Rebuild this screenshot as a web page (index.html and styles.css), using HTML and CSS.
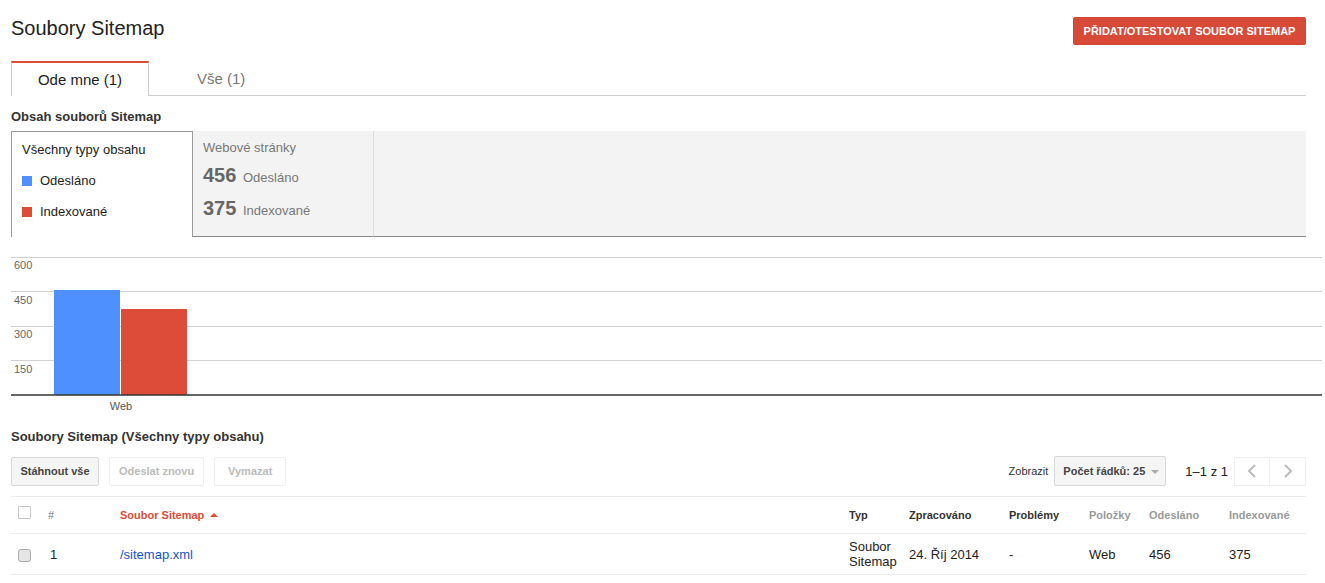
FILE: index.html
```html
<!DOCTYPE html>
<html lang="cs">
<head>
  <meta charset="UTF-8">
  <title>Soubory Sitemap</title>
  <link rel="stylesheet" href="styles.css">
</head>
<body>

<div class="page">
  <div class="header">
    <h1 class="title">Soubory Sitemap</h1>
    <button class="btn-red">PŘIDAT/OTESTOVAT SOUBOR SITEMAP</button>
  </div>

  <div class="tabs">
    <div class="tab active">Ode mne (1)</div>
    <div class="tab">Vše (1)</div>
  </div>

  <div class="subtitle">Obsah souborů Sitemap</div>

  <div class="legend">
    <div class="legend-left">
      <div class="legend-head">Všechny typy obsahu</div>
      <div class="legend-item"><span class="sq blue"></span>Odesláno</div>
      <div class="legend-item"><span class="sq red"></span>Indexované</div>
    </div>
    <div class="legend-stats">
      <div class="stats-head">Webové stránky</div>
      <div class="stat"><b>456</b> Odesláno</div>
      <div class="stat"><b>375</b> Indexované</div>
    </div>
    <div class="legend-rest"></div>
  </div>

  <div class="chart">
    <svg width="1311" height="165" viewBox="0 0 1311 165">
      <g stroke="#d0d0d0" stroke-width="1">
        <line x1="0" y1="7.5" x2="1311" y2="7.5"/>
        <line x1="0" y1="41.5" x2="1311" y2="41.5"/>
        <line x1="0" y1="76.5" x2="1311" y2="76.5"/>
        <line x1="0" y1="110.5" x2="1311" y2="110.5"/>
      </g>
      <g font-family="Arial, 'Liberation Sans', sans-serif" font-size="11" fill="#666">
        <text x="3" y="19">600</text>
        <text x="3" y="54">450</text>
        <text x="3" y="88">300</text>
        <text x="3" y="123">150</text>
        <text x="110" y="160" text-anchor="middle" fill="#555">Web</text>
      </g>
      <rect x="43" y="40" width="66" height="105" fill="#4d90fe"/>
      <rect x="110" y="59" width="66" height="86" fill="#dd4b39"/>
      <line x1="0" y1="145" x2="1311" y2="145" stroke="#333" stroke-width="1.5"/>
    </svg>
  </div>

  <div class="subtitle section">Soubory Sitemap (Všechny typy obsahu)</div>

  <div class="toolbar">
    <div class="actions">
      <button class="btn first">Stáhnout vše</button>
      <button class="btn disabled">Odeslat znovu</button>
      <button class="btn disabled wide">Vymazat</button>
    </div>
    <div class="paging">
      <span class="show">Zobrazit</span>
      <button class="btn select">Počet řádků: 25 <span class="caret"></span></button>
      <span class="range">1–1 z 1</span>
      <div class="nav">
        <button class="nav-btn"><svg width="10" height="14" viewBox="0 0 10 14"><path d="M8 1 L2 7 L8 13" fill="none" stroke="#bbb" stroke-width="2"/></svg></button>
        <button class="nav-btn"><svg width="10" height="14" viewBox="0 0 10 14"><path d="M2 1 L8 7 L2 13" fill="none" stroke="#bbb" stroke-width="2"/></svg></button>
      </div>
    </div>
  </div>

  <table class="grid">
    <colgroup>
      <col style="width:30px"><col style="width:72px"><col><col style="width:60px">
      <col style="width:100px"><col style="width:80px"><col style="width:60px">
      <col style="width:80px"><col style="width:84px">
    </colgroup>
    <thead>
      <tr>
        <th><span class="chk"></span></th>
        <th class="muted">#</th>
        <th class="sorted">Soubor Sitemap <span class="up"></span></th>
        <th>Typ</th>
        <th>Zpracováno</th>
        <th>Problémy</th>
        <th class="light">Položky</th>
        <th class="light">Odesláno</th>
        <th class="light">Indexované</th>
      </tr>
    </thead>
    <tbody>
      <tr>
        <td><span class="chk grey"></span></td>
        <td class="num">1</td>
        <td><a href="#">/sitemap.xml</a></td>
        <td class="typ">Soubor Sitemap</td>
        <td>24. Říj 2014</td>
        <td>-</td>
        <td>Web</td>
        <td>456</td>
        <td>375</td>
      </tr>
    </tbody>
  </table>
</div>

</body>
</html>
```

FILE: styles.css
```css
body {
  margin: 0;
  font-family: Arial, "Liberation Sans", sans-serif;
  font-size: 13px;
  color: #222;
  background: #fff;
}
.page {
  width: 1295px;
  padding-left: 11px;
}

/* hlavicka */
.header {
  display: flex;
  justify-content: space-between;
  align-items: flex-start;
  padding-top: 17px;
}
.title {
  margin: 0;
  font-size: 20px;
  font-weight: normal;
  line-height: 23px;
  color: #222;
}
.btn-red {
  width: 233px;
  height: 28px;
  border: 1px solid #d14836;
  border-radius: 2px;
  background: #d84a38;
  color: #fff;
  font-family: inherit;
  font-size: 11px;
  font-weight: bold;
  padding: 0;
}

/* zalozky */
.tabs {
  display: flex;
  margin-top: 16px;
  border-bottom: 1px solid #ccc;
  height: 34px;
}
.tab {
  font-size: 15px;
  line-height: 35px;
  color: #777;
  padding: 0 0 0 48px;
}
.tab.active {
  width: 136px;
  padding: 0;
  text-align: center;
  color: #222;
  line-height: 34px;
  background: #fff;
  border-top: 2px solid #dd4b39;
  border-left: 1px solid #ccc;
  border-right: 1px solid #ccc;
  height: 33px;
}

.subtitle {
  font-weight: bold;
  font-size: 13px;
  color: #333;
  line-height: 15px;
  margin-top: 13px;
}

/* legenda */
.legend {
  display: flex;
  margin-top: 7px;
  height: 106px;
}
.legend-left {
  border: 1px solid #999;
  border-bottom: none;
  padding: 10px 0 0 10px;
  box-sizing: border-box;
  width: 182px;
  height: 106px;
}
.legend-head {
  line-height: 15px;
  color: #222;
}
.legend-item {
  display: flex;
  align-items: center;
  margin-top: 16px;
  line-height: 15px;
}
.sq {
  width: 10px;
  height: 10px;
  margin-right: 8px;
}
.sq.blue { background: #4d90fe; }
.sq.red { background: #dd4b39; }
.legend-stats {
  width: 170px;
  background: #f3f3f3;
  border-right: 1px solid #ddd;
  border-bottom: 1px solid #888;
  padding: 9px 0 0 10px;
  color: #777;
}
.stats-head {
  font-size: 13px;
  line-height: 15px;
}
.stat {
  margin-top: 8px;
  line-height: 25px;
}
.stat b {
  font-size: 20px;
  color: #666;
  margin-right: 3px;
}
.stat + .stat {
  margin-top: 6px;
}
.legend-rest {
  flex: 1;
  background: #f3f3f3;
  border-bottom: 1px solid #888;
}

.chart {
  margin-top: 13px;
  height: 165px;
}
.chart svg {
  display: block;
}

.section {
  margin-top: 14px;
}

/* nastroje */
.toolbar {
  display: flex;
  justify-content: space-between;
  align-items: center;
  margin-top: 12px;
  height: 30px;
}
.actions {
  display: flex;
  gap: 10px;
}
.btn {
  height: 29px;
  border: 1px solid #d8d8d8;
  border-radius: 2px;
  background: #f5f5f5;
  color: #444;
  font-family: inherit;
  font-size: 11px;
  font-weight: bold;
  padding: 0 9px;
  white-space: nowrap;
}
.btn.first {
  width: 88px;
  padding: 0;
}
.btn.disabled {
  background: #fff;
  border-color: #eee;
  color: #bbb;
}
.btn.wide {
  width: 72px;
}
.paging {
  display: flex;
  align-items: center;
}
.show {
  font-size: 11px;
  color: #333;
  margin-right: 6px;
}
.select {
  width: 112px;
  height: 30px;
  text-align: left;
  padding-left: 8px;
  color: #444;
}
.caret {
  display: inline-block;
  width: 0;
  height: 0;
  border-left: 4px solid transparent;
  border-right: 4px solid transparent;
  border-top: 4px solid #aaa;
  vertical-align: middle;
  margin-left: 3px;
}
.range {
  margin-left: 19px;
  font-size: 13px;
  color: #222;
}
.nav {
  display: flex;
  margin-left: 6px;
}
.nav-btn {
  width: 36px;
  height: 29px;
  background: #fff;
  border: 1px solid #eee;
  padding: 0;
  display: flex;
  align-items: center;
  justify-content: center;
}
.nav-btn + .nav-btn {
  border-left: none;
}

/* tabulka */
.grid {
  margin-top: 10px;
  width: 1295px;
  border-collapse: collapse;
  table-layout: fixed;
}
.grid th,
.grid td {
  text-align: left;
  padding: 0 0 0 7px;
  vertical-align: middle;
}
.grid thead tr {
  height: 37px;
  border-top: 1px solid #ebebeb;
  border-bottom: 1px solid #ebebeb;
}
.grid tbody tr {
  height: 41px;
  border-bottom: 1px solid #ebebeb;
}
.grid th {
  font-size: 11px;
  font-weight: bold;
  color: #333;
}
.grid th.muted { color: #777; font-weight: normal; }
.grid th.sorted { color: #dd4b39; }
.grid th.light { color: #999; }
.up {
  display: inline-block;
  width: 0;
  height: 0;
  border-left: 4px solid transparent;
  border-right: 4px solid transparent;
  border-bottom: 4px solid #dd4b39;
  vertical-align: middle;
  margin-left: 3px;
  margin-top: -3px;
}
.chk {
  display: inline-block;
  width: 11px;
  height: 11px;
  border: 1px solid #c6c6c6;
  border-radius: 1px;
  background: #fff;
  vertical-align: middle;
  margin-top: -8px;
}
.chk.grey {
  background: #e6e6e6;
  border-color: #aaa;
  border-radius: 3px;
  margin-top: 0;
}
.grid td {
  font-size: 13px;
  color: #222;
  line-height: 15px;
}
.grid td.num {
  padding-left: 9px;
}
.grid a {
  color: #1155cc;
  text-decoration: none;
}
```
